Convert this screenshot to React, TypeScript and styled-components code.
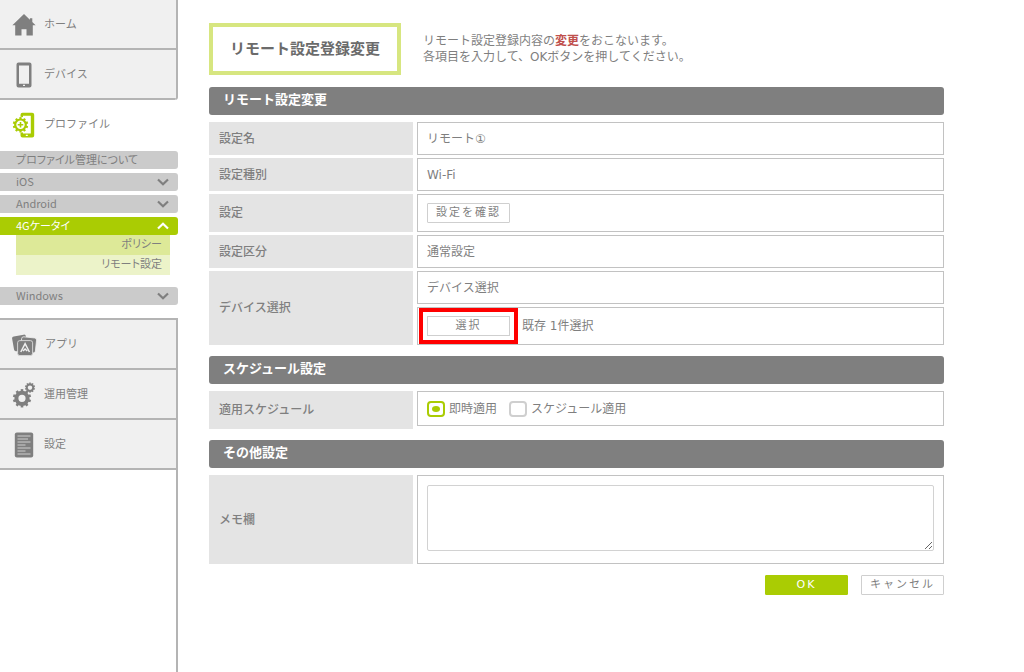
import React from "react";
import styled, { createGlobalStyle } from "styled-components";

const green = "#aacc03";
const ink = "#7f7f7f";
const line = "#b4b4b4";
const panel = "#f0f0f0";

const GlobalStyle = createGlobalStyle`
  *, *::before, *::after { box-sizing: border-box; }
  body {
    margin: 0;
    background: #fff;
    color: ${ink};
    font-family: "DejaVu Sans", "Noto Sans CJK JP", sans-serif;
    font-size: 12px;
    line-height: 16px;
  }
  button, input, textarea { font: inherit; color: inherit; margin: 0; }
`;

const Page = styled.div`
  display: flex;
  min-height: 100vh;
`;

/* ---------- Sidebar ---------- */

const Sidebar = styled.nav`
  flex: none;
  display: flex;
  flex-direction: column;
  width: 178px;
  font-family: "Noto Sans CJK JP", sans-serif;
  font-size: 11px;
`;

const NavGroup = styled.div<{ $end?: "top" | "bottom" }>`
  border-right: 2px solid ${line};
  border-top: ${(p) => (p.$end === "bottom" ? `2px solid ${line}` : "0")};
  border-bottom-right-radius: ${(p) => (p.$end === "top" ? "3px" : "0")};
  overflow: hidden;
`;

const NavItem = styled.a<{ $active?: boolean }>`
  display: flex;
  align-items: center;
  gap: 8px;
  height: 50px;
  padding-left: 12px;
  color: ${ink};
  text-decoration: none;
  background: ${(p) => (p.$active ? "#fff" : panel)};
  border-bottom: 2px solid ${(p) => (p.$active ? "transparent" : line)};

  svg { flex: none; display: block; margin-top: 2px; }
  span { padding-bottom: 2px; }
`;

const SubNav = styled.div`
  display: flex;
  flex-direction: column;
  gap: 4px;
  padding: 1px 0 13px;
`;

const SubBar = styled.a<{ $active?: boolean }>`
  display: flex;
  align-items: center;
  justify-content: space-between;
  height: 18px;
  padding: 0 9px 0 16px;
  border-radius: 0 3px 3px 0;
  background: ${(p) => (p.$active ? green : "#cbcbcb")};
  color: ${(p) => (p.$active ? "#fff" : ink)};
  font-feature-settings: "palt";
  text-decoration: none;

  span { padding-bottom: 3px; }
`;

const SubList = styled.div`
  margin: 0 8px 8px 16px;
`;

const SubLink = styled.a<{ $tone: string }>`
  display: block;
  height: 20px;
  padding-right: 8px;
  line-height: 17px;
  text-align: right;
  text-decoration: none;
  font-feature-settings: "palt";
  color: ${ink};
  background: ${(p) => p.$tone};
`;

const Filler = styled.div`
  flex: 1;
  border-right: 2px solid ${line};
`;

/* ---------- Main ---------- */

const Main = styled.main`
  flex: 1;
  min-width: 0;
  padding: 23px 80px 23px 31px;
`;

const Intro = styled.header`
  display: flex;
  align-items: center;
  gap: 22px;
  margin-bottom: 12px;
`;

const Title = styled.h1`
  flex: none;
  margin: 0;
  padding: 11px 17px;
  border: 4px solid #d7e680;
  color: #6b6b6b;
  font-size: 15px;
  line-height: 22px;
  font-weight: 700;
`;

const Lead = styled.p`
  margin: 0;

  strong { color: #c0504d; font-weight: 700; }
`;

const SectionBar = styled.h2`
  margin: 0 0 7px;
  height: 28px;
  padding: 0 14px;
  border-radius: 3px;
  background: #7f7f7f;
  color: #fff;
  font-size: 13px;
  line-height: 26px;
  font-weight: 700;
`;

const Rows = styled.div`
  display: flex;
  flex-direction: column;
  gap: 3px;
  margin-bottom: 11px;
`;

const Row = styled.div`
  display: flex;
  align-items: stretch;
  gap: 4px;
`;

const RowLabel = styled.div<{ $tall?: boolean }>`
  flex: none;
  display: flex;
  align-items: center;
  width: 204px;
  min-height: ${(p) => (p.$tall ? "38px" : "33px")};
  padding: 0 10px;
  background: #e4e4e4;
  font-weight: 500;
`;

const Values = styled.div`
  flex: 1;
  min-width: 0;
  display: flex;
  flex-direction: column;
  gap: 3px;
`;

const Value = styled.div<{ $size?: "button" | "choice" | "memo" }>`
  display: flex;
  align-items: center;
  gap: 12px;
  min-height: ${(p) => (p.$size === "button" ? "38px" : p.$size === "choice" ? "35px" : "33px")};
  padding: ${(p) => (p.$size === "memo" ? "9px 9px 12px" : "0 9px")};
  border: 1px solid #c2c2c2;
`;

const Button = styled.button<{ $primary?: boolean; $marked?: boolean }>`
  width: 83px;
  height: 20px;
  padding: 0;
  border: 1px solid ${(p) => (p.$primary ? green : "#cfcfcf")};
  border-radius: ${(p) => (p.$marked ? "0" : "1px")};
  background: ${(p) => (p.$primary ? green : "#fff")};
  color: ${(p) => (p.$primary ? "#fff" : ink)};
  font-size: 11px;
  line-height: 16px;
  letter-spacing: 2px;
  white-space: nowrap;
  outline: ${(p) => (p.$marked ? "4px solid #f00" : "none")};
  outline-offset: 4px;
`;

const Choice = styled.label`
  display: flex;
  align-items: center;
  gap: 4px;
`;

const Radio = styled.input`
  appearance: none;
  display: grid;
  place-items: center;
  width: 18px;
  height: 16px;
  border: 2px solid #cfcfcf;
  border-radius: 4px;
  background: #fff;

  &:checked { border-color: ${green}; }
  &:checked::before {
    content: "";
    width: 8px;
    height: 6px;
    border-radius: 50%;
    background: ${green};
  }
`;

const Memo = styled.textarea`
  display: block;
  width: 100%;
  height: 66px;
  padding: 4px;
  border: 1px solid #d2d2d2;
  border-radius: 2px;
  background: #fff;
`;

const Actions = styled.div`
  display: flex;
  justify-content: flex-end;
  gap: 13px;
`;

/* ---------- Icons ---------- */

const HomeIcon = () => (
  <svg width="24" height="24" viewBox="0 0 24 24" fill={ink}>
    <path d="M12 1 .4 12.200h2.800v10.300h6.300v-6.300h5v6.300h6.300V12.200h2.800L20.300 9V5.200h-2.400v1.500z" />
  </svg>
);

const DeviceIcon = () => (
  <svg width="24" height="26" viewBox="0 0 24 26">
    <path
      fill={ink}
      fillRule="evenodd"
      d="M6.500.5h11a2 2 0 0 1 2 2v21a2 2 0 0 1-2 2h-11a2 2 0 0 1-2-2v-21a2 2 0 0 1 2-2zm.5 3v18.200h10V3.500zM11 22.800v1.200h2v-1.200z"
    />
  </svg>
);

const teeth = [0, 36, 72, 108, 144, 180, 216, 252, 288, 324];

const Gear = ({ cx, cy, r, hole, tooth, color }: { cx: number; cy: number; r: number; hole: number; tooth: number; color: string }) => (
  <g transform={`translate(${cx} ${cy})`}>
    <circle r={(r + hole) / 2} fill="none" stroke={color} strokeWidth={r - hole} />
    {teeth.map((angle) => (
      <rect key={angle} x={-tooth / 2} y={-r - tooth * 0.6} width={tooth} height={tooth} fill={color} transform={`rotate(${angle})`} />
    ))}
  </g>
);

const ProfileIcon = () => (
  <svg width="24" height="26" viewBox="0 0 24 26">
    <path
      fill={green}
      fillRule="evenodd"
      d="M10.500.8h9.700a2 2 0 0 1 2 2v20.700a2 2 0 0 1-2 2h-9.700a2 2 0 0 1-2-2V2.800a2 2 0 0 1 2-2zm.5 2.900v17.800h7.800V3.700zM13.800 22.700V24h2v-1.300z"
    />
    <circle cx="8.500" cy="12.800" r="8" fill="#fff" />
    <Gear cx={8.5} cy={12.8} r={6.4} hole={4.2} tooth={2.2} color={green} />
    <path d="M8.500 10v5.600M5.700 12.800h5.600" stroke={green} strokeWidth="1.600" />
  </svg>
);

const AppsIcon = () => (
  <svg width="25" height="24" viewBox="0 0 25 24">
    <rect x="1" y="2.400" width="14" height="15" rx="2" fill={ink} transform="rotate(-10 8 10)" />
    <rect x="9" y="4.300" width="15" height="15" rx="2" fill={ink} stroke={panel} strokeWidth="0.800" transform="rotate(6 16 12)" />
    <rect x="5.600" y="7.600" width="15" height="15" rx="2.200" fill={ink} stroke="#dcdcdc" strokeWidth="0.900" />
    <path d="m8.800 19 4.300-8.300 4.300 8.300m-6.400-1 2.100-2 2.100 2" fill="none" stroke={panel} strokeWidth="1.500" />
  </svg>
);

const GearsIcon = () => (
  <svg width="24" height="26" viewBox="0 0 24 26">
    <Gear cx={10} cy={16.3} r={7.6} hole={3.6} tooth={2.6} color={ink} />
    <Gear cx={18} cy={5.6} r={4.3} hole={2.2} tooth={1.4} color={ink} />
  </svg>
);

const ListIcon = () => (
  <svg width="24" height="26" viewBox="0 0 24 26">
    <rect x="2.800" y="0.500" width="18.400" height="25" rx="2" fill={ink} />
    <path
      d="M5.500 4h13M5.500 7h10.500M5.500 10h13M5.500 13h8M5.500 16h13M5.500 19h8M5.500 22h13"
      stroke="#cfcfcf"
      strokeWidth="1"
    />
  </svg>
);

const Chevron = ({ up }: { up?: boolean }) => (
  <svg width="12" height="8" viewBox="0 0 12 8" fill="none" stroke={up ? "#fff" : ink} strokeWidth="2.200">
    <path d={up ? "M1 6.500 6 1.800l5 4.700" : "M1 1.500 6 6.200l5-4.700"} />
  </svg>
);

export default function App() {
  return (
    <>
      <GlobalStyle />
      <Page>
        <Sidebar>
          <NavGroup $end="top">
            <NavItem href="#home"><HomeIcon /><span>ホーム</span></NavItem>
            <NavItem href="#device"><DeviceIcon /><span>デバイス</span></NavItem>
          </NavGroup>
          <NavItem href="#profile" $active><ProfileIcon /><span>プロファイル</span></NavItem>
          <SubNav>
            <SubBar href="#about"><span>プロファイル管理について</span></SubBar>
            <SubBar href="#ios"><span>iOS</span><Chevron /></SubBar>
            <SubBar href="#android"><span>Android</span><Chevron /></SubBar>
            <div>
              <SubBar href="#4g" $active><span>4Gケータイ</span><Chevron up /></SubBar>
              <SubList>
                <SubLink href="#policy" $tone="#dde998">ポリシー</SubLink>
                <SubLink href="#remote" $tone="#ecf3c9">リモート設定</SubLink>
              </SubList>
            </div>
            <SubBar href="#windows"><span>Windows</span><Chevron /></SubBar>
          </SubNav>
          <NavGroup $end="bottom">
            <NavItem href="#apps"><AppsIcon /><span>アプリ</span></NavItem>
            <NavItem href="#operation"><GearsIcon /><span>運用管理</span></NavItem>
            <NavItem href="#settings"><ListIcon /><span>設定</span></NavItem>
          </NavGroup>
          <Filler />
        </Sidebar>

        <Main>
          <Intro>
            <Title>リモート設定登録変更</Title>
            <Lead>
              リモート設定登録内容の<strong>変更</strong>をおこないます。
              <br />
              各項目を入力して、OKボタンを押してください。
            </Lead>
          </Intro>

          <SectionBar>リモート設定変更</SectionBar>
          <Rows>
            <Row>
              <RowLabel>設定名</RowLabel>
              <Values><Value>リモート①</Value></Values>
            </Row>
            <Row>
              <RowLabel>設定種別</RowLabel>
              <Values><Value>Wi-Fi</Value></Values>
            </Row>
            <Row>
              <RowLabel>設定</RowLabel>
              <Values><Value $size="button"><Button type="button">設定を確認</Button></Value></Values>
            </Row>
            <Row>
              <RowLabel>設定区分</RowLabel>
              <Values><Value>通常設定</Value></Values>
            </Row>
            <Row>
              <RowLabel>デバイス選択</RowLabel>
              <Values>
                <Value>デバイス選択</Value>
                <Value $size="button">
                  <Button type="button" $marked>選択</Button>
                  <span>既存 1件選択</span>
                </Value>
              </Values>
            </Row>
          </Rows>

          <SectionBar>スケジュール設定</SectionBar>
          <Rows>
            <Row>
              <RowLabel $tall id="schedule">適用スケジュール</RowLabel>
              <Values>
                <Value $size="choice" role="radiogroup" aria-labelledby="schedule">
                  <Choice><Radio type="radio" name="schedule" defaultChecked />即時適用</Choice>
                  <Choice><Radio type="radio" name="schedule" />スケジュール適用</Choice>
                </Value>
              </Values>
            </Row>
          </Rows>

          <SectionBar>その他設定</SectionBar>
          <Rows>
            <Row>
              <RowLabel as="label" htmlFor="memo">メモ欄</RowLabel>
              <Values><Value $size="memo"><Memo id="memo" /></Value></Values>
            </Row>
          </Rows>

          <Actions>
            <Button type="submit" $primary>OK</Button>
            <Button type="button">キャンセル</Button>
          </Actions>
        </Main>
      </Page>
    </>
  );
}
